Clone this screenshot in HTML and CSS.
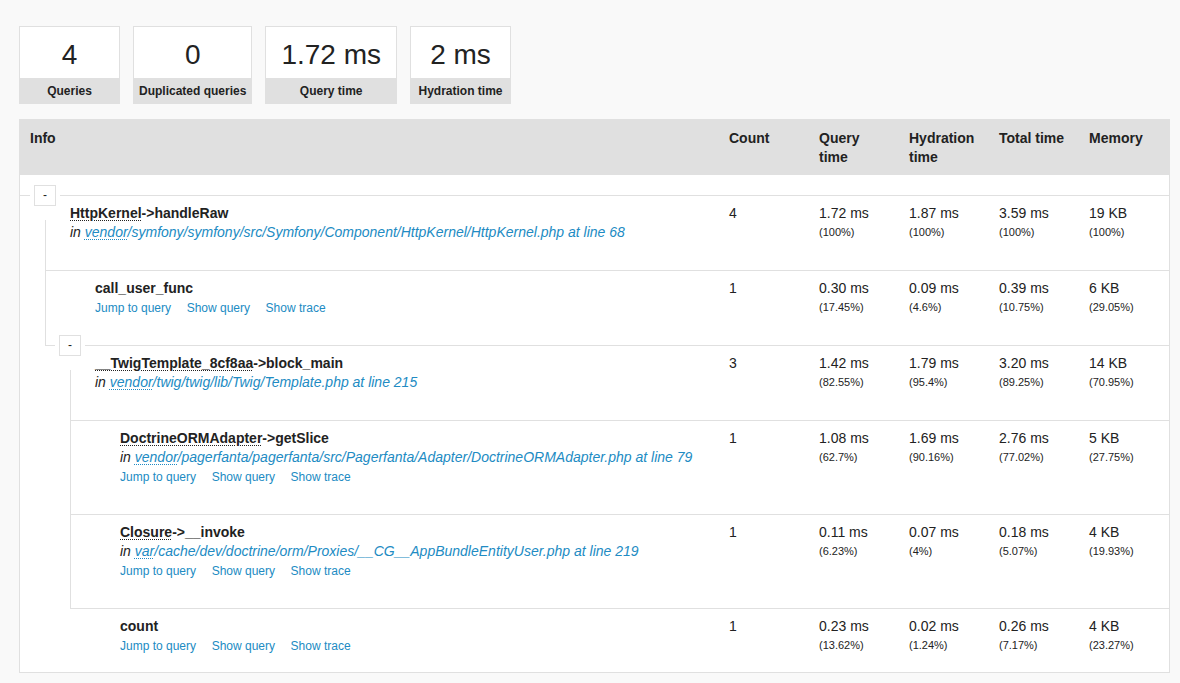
FILE: index.html
```html
<!DOCTYPE html>
<html lang="en">
<head>
<meta charset="utf-8">
<title>Doctrine queries</title>
<link rel="stylesheet" href="styles.css">
</head>
<body>
<div class="page">
  <div class="metrics">
    <div class="metric"><span class="metric-value">4</span><span class="metric-label">Queries</span></div>
    <div class="metric"><span class="metric-value">0</span><span class="metric-label">Duplicated queries</span></div>
    <div class="metric"><span class="metric-value">1.72 ms</span><span class="metric-label">Query time</span></div>
    <div class="metric"><span class="metric-value">2 ms</span><span class="metric-label">Hydration time</span></div>
  </div>

  <div class="qtable">
    <div class="qhead">
      <div class="cell-info">Info</div>
      <div class="cell-num">Count</div>
      <div class="cell-num">Query time</div>
      <div class="cell-num">Hydration time</div>
      <div class="cell-num">Total time</div>
      <div class="cell-num">Memory</div>
    </div>
    <div class="qspacer"></div>

    <div class="row bt">
      <span class="toggle">-</span>
      <div class="cell-info pad50">
        <div class="title"><abbr title="Symfony\Component\HttpKernel\HttpKernel">HttpKernel</abbr>-&gt;handleRaw</div>
        <div class="path">in <a href="#"><abbr title="/var/www/vendor">vendor</abbr>/symfony/symfony/src/Symfony/Component/HttpKernel/HttpKernel.php at line 68</a></div>
      </div>
      <div class="cell-num">4</div>
      <div class="cell-num">1.72 ms<span class="pct">(100%)</span></div>
      <div class="cell-num">1.87 ms<span class="pct">(100%)</span></div>
      <div class="cell-num">3.59 ms<span class="pct">(100%)</span></div>
      <div class="cell-num">19 KB<span class="pct">(100%)</span></div>
    </div>

    <div class="children lvl1">
      <div class="row bt">
        <div class="cell-info pad49">
          <div class="title">call_user_func</div>
          <div class="links"><a href="#">Jump to query</a><a href="#">Show query</a><a href="#">Show trace</a></div>
        </div>
        <div class="cell-num">1</div>
        <div class="cell-num">0.30 ms<span class="pct">(17.45%)</span></div>
        <div class="cell-num">0.09 ms<span class="pct">(4.6%)</span></div>
        <div class="cell-num">0.39 ms<span class="pct">(10.75%)</span></div>
        <div class="cell-num">6 KB<span class="pct">(29.05%)</span></div>
      </div>
    </div>

    <div class="row lvl1">
      <span class="toggle">-</span>
      <div class="cell-info pad50">
        <div class="title"><abbr title="__TwigTemplate_8cf8aa">__TwigTemplate_8cf8aa</abbr>-&gt;block_main</div>
        <div class="path">in <a href="#"><abbr title="/var/www/vendor">vendor</abbr>/twig/twig/lib/Twig/Template.php at line 215</a></div>
      </div>
      <div class="cell-num">3</div>
      <div class="cell-num">1.42 ms<span class="pct">(82.55%)</span></div>
      <div class="cell-num">1.79 ms<span class="pct">(95.4%)</span></div>
      <div class="cell-num">3.20 ms<span class="pct">(89.25%)</span></div>
      <div class="cell-num">14 KB<span class="pct">(70.95%)</span></div>
    </div>

    <div class="children lvl2">
      <div class="row bt">
        <div class="cell-info pad49">
          <div class="title"><abbr title="Pagerfanta\Adapter\DoctrineORMAdapter">DoctrineORMAdapter</abbr>-&gt;getSlice</div>
          <div class="path">in <a href="#"><abbr title="/var/www/vendor">vendor</abbr>/pagerfanta/pagerfanta/src/Pagerfanta/Adapter/DoctrineORMAdapter.php at line 79</a></div>
          <div class="links"><a href="#">Jump to query</a><a href="#">Show query</a><a href="#">Show trace</a></div>
        </div>
        <div class="cell-num">1</div>
        <div class="cell-num">1.08 ms<span class="pct">(62.7%)</span></div>
        <div class="cell-num">1.69 ms<span class="pct">(90.16%)</span></div>
        <div class="cell-num">2.76 ms<span class="pct">(77.02%)</span></div>
        <div class="cell-num">5 KB<span class="pct">(27.75%)</span></div>
      </div>
      <div class="row bt">
        <div class="cell-info pad49">
          <div class="title"><abbr title="Closure">Closure</abbr>-&gt;__invoke</div>
          <div class="path">in <a href="#"><abbr title="/var/www/var">var</abbr>/cache/dev/doctrine/orm/Proxies/__CG__AppBundleEntityUser.php at line 219</a></div>
          <div class="links"><a href="#">Jump to query</a><a href="#">Show query</a><a href="#">Show trace</a></div>
        </div>
        <div class="cell-num">1</div>
        <div class="cell-num">0.11 ms<span class="pct">(6.23%)</span></div>
        <div class="cell-num">0.07 ms<span class="pct">(4%)</span></div>
        <div class="cell-num">0.18 ms<span class="pct">(5.07%)</span></div>
        <div class="cell-num">4 KB<span class="pct">(19.93%)</span></div>
      </div>
    </div>

    <div class="row lvl2 last">
      <div class="cell-info pad50">
        <div class="title">count</div>
        <div class="links"><a href="#">Jump to query</a><a href="#">Show query</a><a href="#">Show trace</a></div>
      </div>
      <div class="cell-num">1</div>
      <div class="cell-num">0.23 ms<span class="pct">(13.62%)</span></div>
      <div class="cell-num">0.02 ms<span class="pct">(1.24%)</span></div>
      <div class="cell-num">0.26 ms<span class="pct">(7.17%)</span></div>
      <div class="cell-num">4 KB<span class="pct">(23.27%)</span></div>
    </div>
  </div>
</div>
</body>
</html>
```

FILE: styles.css
```css
* { box-sizing: border-box; }

body {
  margin: 0;
  background: #f9f9f9;
  color: #222;
  font-family: "Liberation Sans", Arial, Helvetica, sans-serif;
  font-size: 14px;
}

a { color: #218bc3; text-decoration: none; }

abbr {
  text-decoration: underline dotted;
  text-decoration-thickness: 1px;
  text-underline-offset: 2px;
  cursor: help;
}

.page { padding: 26px 10px 0 19px; }

/* metric cards */
.metrics { display: flex; gap: 13px; margin-bottom: 15px; }
.metric {
  background: #fff;
  border: 1px solid #e0e0e0;
  min-width: 101px;
  text-align: center;
}
.metric-value {
  display: block;
  font-size: 28px;
  line-height: 32px;
  padding: 12px 15px 7px;
}
.metric-label {
  display: block;
  background: #e0e0e0;
  font-size: 12px;
  font-weight: bold;
  line-height: 17px;
  padding: 5px 5px 3px;
}

/* table */
.qtable { background: #fff; border: 1px solid #e0e0e0; }
.qhead {
  display: flex;
  background: #e0e0e0;
  padding: 9px 0 9px;
  font-weight: bold;
  line-height: 18.5px;
}
.qhead .cell-info { padding-left: 10px; }
.qspacer { height: 20px; }

.cell-info { flex: 1; min-width: 0; }
.cell-num { flex: none; width: 90px; padding: 0 10px; }

.row {
  display: flex;
  position: relative;
  padding: 8px 0 28px;
  line-height: 19px;
}
.row.bt { border-top: 1px solid #e0e0e0; }
.row.last { padding-bottom: 17px; }
.row.lvl1 { margin-left: 25px; }
.row.lvl2 { margin-left: 50px; }

.pad50 { padding-left: 50px; }
.pad49 { padding-left: 49px; }

.title { font-weight: bold; white-space: nowrap; }
.path { font-style: italic; white-space: nowrap; }
.links {
  display: flex;
  gap: 15.6px;
  font-size: 12px;
  padding-top: 1px;
  margin-bottom: -1px;
}
.pct { display: block; font-size: 11px; }

.children {
  position: relative;
  border-left: 1px solid #e0e0e0;
  border-bottom: 1px solid #e0e0e0;
}
.children.lvl1 { margin-left: 25px; }
.children.lvl2 { margin-left: 50px; }
.children::before {
  content: "";
  position: absolute;
  left: -1px;
  top: -50px;
  width: 1px;
  height: 50px;
  background: #e0e0e0;
}

.toggle {
  position: absolute;
  left: 14px;
  top: -11px;
  width: 22px;
  height: 21px;
  border: 1px solid #e0e0e0;
  background: #fff;
  box-shadow: 0 0 0 4px #fff;
  font-size: 12px;
  line-height: 18px;
  text-align: center;
  color: #222;
}
```
